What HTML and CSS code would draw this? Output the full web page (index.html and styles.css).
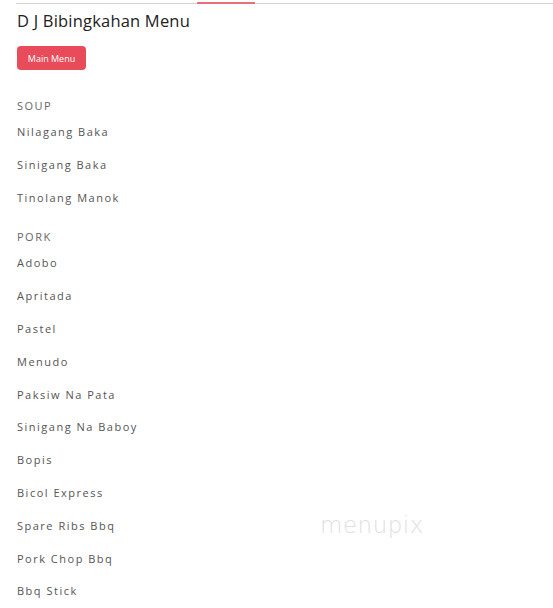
FILE: index.html
```html
<!DOCTYPE html>
<html lang="en">
<head>
    <meta charset="UTF-8">
    <meta name="viewport" content="width=device-width, initial-scale=1.0">
    <title>D J Bibingkahan Menu</title>
    <link rel="stylesheet" href="styles.css">
</head>
<body>
    <div class="tabs-line"><span class="tab-active"></span></div>
    <div class="container">
        <h2>D J Bibingkahan Menu</h2>
        <button class="main-btn">Main Menu</button>

        <!-- Soup -->
        <div class="section">
            <h4>SOUP</h4>
            <ul>
                <li>Nilagang Baka</li>
                <li>Sinigang Baka</li>
                <li>Tinolang Manok</li>
            </ul>
        </div>

        <!-- Pork -->
        <div class="section">
            <h4>PORK</h4>
            <ul>
                <li>Adobo</li>
                <li>Apritada</li>
                <li>Pastel</li>
                <li>Menudo</li>
                <li>Paksiw Na Pata</li>
                <li>Sinigang Na Baboy</li>
                <li>Bopis</li>
                <li>Bicol Express</li>
                <li>Spare Ribs Bbq</li>
                <li>Pork Chop Bbq</li>
                <li>Bbq Stick</li>
            </ul>
        </div>
    </div>
    <div class="watermark">menupix</div>
</body>
</html>
```

FILE: styles.css
```css
body {
    font-family: 'Open Sans', sans-serif;
    background: #fff;
    margin: 0;
    padding: 0;
    color: #333;
    height: 608px;
    overflow: hidden;
    position: relative;
}
.tabs-line {
    margin-left: 16px;
    margin-top: 3px;
    height: 1px;
    background: #d4d4d4;
    position: relative;
}
.tab-active {
    position: absolute;
    left: 181px;
    top: -1px;
    width: 58px;
    height: 2px;
    background: #ea6f7b;
}
.container {
    padding: 0 17px;
}
h2 {
    font-size: 16.5px;
    font-weight: 400;
    color: #222;
    margin: 6px 0 0;
    line-height: 22px;
    letter-spacing: 0.2px;
}
.main-btn {
    margin-top: 14px;
    background: #e84c5a;
    color: #fff;
    border: none;
    border-radius: 4px;
    font-family: inherit;
    font-size: 9px;
    height: 24px;
    width: 69px;
    padding: 0;
    display: block;
}
.section {
    margin-top: 28px;
}
.section + .section {
    margin-top: 17px;
}
h4 {
    margin: 0;
    font-size: 11px;
    font-weight: 400;
    color: #666;
    letter-spacing: 1.5px;
    line-height: 16px;
}
ul {
    list-style: none;
    margin: 0;
    padding: 0;
}
li {
    font-size: 11px;
    color: #555;
    letter-spacing: 1.5px;
    line-height: 16px;
    padding: 10px 0 6.8px;
}
.watermark {
    position: absolute;
    left: 320px;
    top: 512px;
    font-size: 23px;
    color: #e0e0e0;
    font-family: 'DejaVu Sans', sans-serif;
    font-weight: 200;
    letter-spacing: 0.5px;
}
```
